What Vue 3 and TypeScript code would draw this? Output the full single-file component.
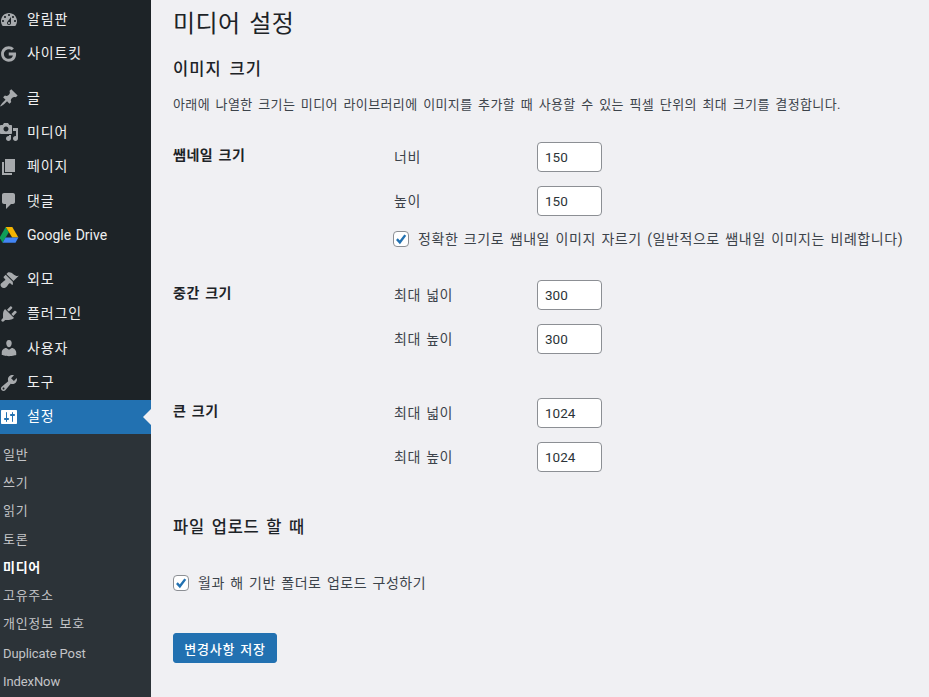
<script setup lang="ts">
interface MenuItem { label: string; d?: string; kind?: string; gap?: boolean; active?: boolean }
const menu: MenuItem[] = [
  { label: '알림판', d: 'M3.76 16h12.48c1.1-1.37 1.76-3.11 1.76-5 0-4.42-3.58-8-8-8s-8 3.58-8 8c0 1.89.66 3.63 1.76 5zM10 4c.55 0 1 .45 1 1s-.45 1-1 1-1-.45-1-1 .45-1 1-1zM6 6c.55 0 1 .45 1 1s-.45 1-1 1-1-.45-1-1 .45-1 1-1zm8 0c.55 0 1 .45 1 1s-.45 1-1 1-1-.45-1-1 .45-1 1-1zm-5.37 5.55L12 7v6c0 1.1-.9 2-2 2s-2-.9-2-2c0-.57.24-1.08.63-1.45zM4 10c.55 0 1 .45 1 1s-.45 1-1 1-1-.45-1-1 .45-1 1-1zm12 0c.55 0 1 .45 1 1s-.45 1-1 1-1-.45-1-1 .45-1 1-1zm-5 3c0-.55-.45-1-1-1s-1 .45-1 1 .45 1 1 1 1-.45 1-1z' },
  { label: '사이트킷', kind: 'g' },
  { label: '글', gap: true, d: 'M10.44 3.02l1.82-1.82 6.36 6.35-1.83 1.82c-1.05-.68-2.48-.57-3.41.36l-.75.75c-.92.93-1.04 2.35-.35 3.41l-1.83 1.82-2.41-2.41-2.8 2.79c-.42.42-3.38 2.71-3.8 2.29s1.86-3.39 2.28-3.81l2.79-2.79L4.1 9.36l1.83-1.82c1.05.69 2.48.57 3.4-.36l.75-.75c.93-.92 1.05-2.35.36-3.41z' },
  { label: '미디어', d: 'M13 11V4c0-.55-.45-1-1-1h-1.67L9 1H5L3.67 3H2c-.55 0-1 .45-1 1v7c0 .55.45 1 1 1h10c.55 0 1-.45 1-1zM7 4.5c1.38 0 2.5 1.12 2.5 2.5S8.38 9.5 7 9.5 4.5 8.38 4.5 7 5.62 4.5 7 4.5zM14 6h5v10.5c0 1.38-1.12 2.5-2.5 2.5S14 17.88 14 16.5s1.12-2.5 2.5-2.5c.17 0 .34.02.5.05V9h-3V6zm-4 8.05V13h2v3.5c0 1.38-1.12 2.5-2.5 2.5S7 17.88 7 16.5 8.12 14 9.5 14c.17 0 .34.02.5.05z' },
  { label: '페이지', d: 'M6 15V2h10v13H6zm-1 1h8v2H3V5h2v11z' },
  { label: '댓글', d: 'M5 2h9c1.1 0 2 .9 2 2v7c0 1.1-.9 2-2 2h-2l-5 5v-5H5c-1.1 0-2-.9-2-2V4c0-1.1.9-2 2-2z' },
  { label: 'Google Drive', kind: 'drive' },
  { label: '외모', gap: true, d: 'M14.48 11.06L7.41 3.99l1.5-1.5c.5-.56 2.3-.47 3.51.32 1.21.8 1.43 1.28 2.91 2.1 1.18.64 2.45 1.26 4.45.85zm-.71.71L6.7 4.7 4.93 6.47c-.39.39-.39 1.02 0 1.41l1.06 1.06c.39.39.39 1.03 0 1.42-.6.6-1.43 1.11-2.21 1.69-.35.26-.7.53-1.01.84C1.43 13.23.99 15.6 2.43 17c1.43 1.43 3.79 1 5.15-.35.31-.31.58-.66.84-1.01.58-.78 1.09-1.61 1.69-2.21.39-.39 1.02-.39 1.41 0l1.06 1.06c.39.39 1.02.39 1.41 0z' },
  { label: '플러그인', d: 'M13.11 4.36L9.87 7.6 8 5.73l3.24-3.24c.35-.34 1.05-.2 1.56.32.52.51.66 1.21.31 1.55zm-8 1.77l.91-1.12 9.01 9.01-1.19.84c-.71.71-2.63 1.16-3.82 1.16H6.14L4.9 17.26c-.59.59-1.54.59-2.12 0-.59-.58-.59-1.53 0-2.12l1.24-1.24v-3.88c0-1.13.4-3.19 1.09-3.89zm7.26 3.97l3.24-3.24c.34-.35 1.04-.21 1.55.31.52.51.66 1.21.31 1.55l-3.24 3.25z' },
  { label: '사용자', d: 'M10 9.25c-2.27 0-2.73-3.44-2.73-3.44C7 4.02 7.82 2 9.97 2c2.16 0 2.98 2.02 2.71 3.81 0 0-.41 3.44-2.68 3.44zm0 2.57L12.72 10c2.39 0 4.52 2.33 4.52 4.53v2.49s-3.65 1.13-7.24 1.13c-3.65 0-7.24-1.13-7.24-1.13v-2.49c0-2.25 1.94-4.48 4.47-4.48z' },
  { label: '도구', d: 'M16.68 9.77c-1.34 1.34-3.3 1.67-4.95.99l-5.41 6.52c-.99.99-2.59.99-3.58 0s-.99-2.59 0-3.57l6.52-5.42c-.68-1.65-.35-3.61.99-4.95 1.28-1.28 3.12-1.62 4.72-1.06l-2.89 2.89 2.82 2.82 2.86-2.87c.53 1.58.18 3.39-1.08 4.65zM3.81 16.21c.4.39 1.04.39 1.43 0 .4-.4.4-1.04 0-1.43-.39-.4-1.03-.4-1.43 0-.39.39-.39 1.03 0 1.43z' },
  { label: '설정', active: true, d: 'M18 16V4c0-.55-.45-1-1-1H3c-.55 0-1 .45-1 1v12c0 .55.45 1 1 1h14c.55 0 1-.45 1-1zM8 11h1c.55 0 1 .45 1 1s-.45 1-1 1H8v1.5c0 .28-.22.5-.5.5s-.5-.22-.5-.5V13H6c-.55 0-1-.45-1-1s.45-1 1-1h1V5.5c0-.28.22-.5.5-.5s.5.22.5.5V11zm5-2h-1c-.55 0-1-.45-1-1s.45-1 1-1h1V5.5c0-.28.22-.5.5-.5s.5.22.5.5V7h1c.55 0 1 .45 1 1s-.45 1-1 1h-1v5.5c0 .28-.22.5-.5.5s-.5-.22-.5-.5V9z' }
]
const sub: { label: string; current?: boolean; latin?: boolean }[] = [
  { label: '일반' }, { label: '쓰기' }, { label: '읽기' }, { label: '토론' },
  { label: '미디어', current: true }, { label: '고유주소' }, { label: '개인정보 보호' },
  { label: 'Duplicate Post', latin: true }, { label: 'IndexNow', latin: true }
]
const sizes = [
  { title: '쌤네일 크기', w: '너비', h: '높이', wv: '150', hv: '150', crop: true },
  { title: '중간 크기', w: '최대 넓이', h: '최대 높이', wv: '300', hv: '300', crop: false },
  { title: '큰 크기', w: '최대 넓이', h: '최대 높이', wv: '1024', hv: '1024', crop: false }
]
</script>

<template>
  <div class="page">
    <aside class="side">
      <ul class="menu">
        <li v-for="m in menu" :key="m.label" class="item" :class="{ gap: m.gap, active: m.active, latin: m.kind === 'drive' }">
          <svg v-if="m.d" class="ico" viewBox="0 0 20 20"><path :d="m.d" fill-rule="evenodd" fill="currentColor" /></svg>
          <svg v-else-if="m.kind === 'g'" class="ico" viewBox="-1.500 -2 24 24"><path fill="currentColor" d="M10.2 8.3v3.5h5c-.3 1.6-1.9 4-5 4-3.2 0-5.8-2.600-5.800-5.800s2.600-5.800 5.800-5.800c1.700 0 2.900.7 3.700 1.400l2.500-2.500C14.600 1.700 12.600.8 10.200.8 5.100.8 1 4.900 1 10s4.100 9.200 9.200 9.200c5.300 0 8.800-3.700 8.800-9 0-.7-.1-1.300-.2-1.900z" /></svg>
          <svg v-else class="ico" viewBox="0 0 20 20">
            <path fill="#0f9d58" d="M6.700 2 .6 12.600l3 5.200L9.800 7.200z" />
            <path fill="#f4b400" d="M6.700 2h6.600l6.100 10.600h-6.200z" />
            <path fill="#4285f4" d="M3.600 17.800h12.900l2.900-5.200H6.600z" />
          </svg>
          <span class="lbl">{{ m.label }}</span>
        </li>
      </ul>
      <ul class="sub">
        <li v-for="s in sub" :key="s.label" :class="{ current: s.current, latin: s.latin }">{{ s.label }}</li>
      </ul>
    </aside>

    <main class="main">
      <h1>미디어 설정</h1>
      <h2 class="h-img">이미지 크기</h2>
      <p class="desc">아래에 나열한 크기는 미디어 라이브러리에 이미지를 추가할 때 사용할 수 있는 픽셀 단위의 최대 크기를 결정합니다.</p>

      <section v-for="s in sizes" :key="s.title" class="size" :class="{ crop: s.crop }">
        <div class="th">{{ s.title }}</div>
        <div class="fields">
          <label class="field"><span>{{ s.w }}</span><input class="num" type="text" :value="s.wv" /></label>
          <label class="field"><span>{{ s.h }}</span><input class="num" type="text" :value="s.hv" /></label>
          <div v-if="s.crop" class="check crop-check">
            <span class="box"><svg viewBox="0 0 16 16"><path d="M3.300 8.100 6.700 11.800 12.900 3.600" fill="none" stroke="#2271b1" stroke-width="2.700" /></svg></span>
            <span>정확한 크기로 쌤내일 이미지 자르기 (일반적으로 쌤내일 이미지는 비례합니다)</span>
          </div>
        </div>
      </section>

      <h2 class="h-upload">파일 업로드 할 때</h2>
      <div class="check upload-check">
        <span class="box"><svg viewBox="0 0 16 16"><path d="M3.300 8.100 6.700 11.800 12.900 3.600" fill="none" stroke="#2271b1" stroke-width="2.700" /></svg></span>
        <span>월과 해 기반 폴더로 업로드 구성하기</span>
      </div>
      <button class="save" type="button">변경사항 저장</button>
    </main>
  </div>
</template>

<style>
html, body { margin: 0; height: 100%; overflow: hidden; background: #f0f0f3; }
</style>

<style scoped>
.page {
  display: flex;
  width: 929px;
  height: 697px;
  overflow: hidden;
  background: #f0f0f3;
  color: #3c434a;
  font-family: Roboto, "Noto Sans CJK KR", sans-serif;
  font-size: 13px;
}
.side { width: 151px; flex: none; background: #1d2327; }
.menu, .sub { list-style: none; margin: 0; padding: 0; }
.menu { padding-top: 2.400px; }
.item {
  position: relative;
  display: flex;
  align-items: center;
  gap: 8px;
  height: 34.300px;
  margin-left: -1px;
  color: #f0f0f1;
  font-size: 14px;
  letter-spacing: .9px;
  word-spacing: 1px;
}
.item.latin { letter-spacing: 0; }
.lbl { padding-bottom: 3px; }
.item.latin .lbl { padding-bottom: 0; }
.item.gap { margin-top: 10px; }
.ico { width: 20px; height: 20px; flex: none; color: #a7aaad; }
.item.active { height: 34px; background: #2271b1; color: #fff; }
.item.active .ico { color: #fff; }
.item.active::after {
  content: "";
  position: absolute;
  right: 0;
  top: 9px;
  border: 8px solid transparent;
  border-right-color: #f0f0f3;
}
.sub {
  background: #2c3338;
  padding-top: 7px;
  height: 263px;
}
.sub li {
  height: 28.300px;
  line-height: 28.300px;
  padding-left: 3px;
  color: #c3c4c7;
  font-size: 13px;
  letter-spacing: .7px;
  word-spacing: 2px;
}
.sub li.current { color: #fff; font-weight: 700; }
.sub li.latin { position: relative; top: 1px; letter-spacing: -.1px; word-spacing: 0; }

.main {
  flex: 1;
  min-width: 0;
  padding-left: 22px;
  letter-spacing: .5px;
  word-spacing: 1.500px;
}
h1 {
  margin: 0;
  padding-top: 8px;
  font-size: 24px;
  font-weight: 400;
  line-height: 32px;
  color: #1d2327;
  letter-spacing: .4px;
  word-spacing: 2.500px;
}
h2 {
  margin: 0;
  font-size: 16.500px;
  font-weight: 500;
  line-height: 24px;
  color: #1d2327;
  letter-spacing: 1.100px;
  word-spacing: 2.500px;
}
.h-img { margin-top: 18px; }
.desc { margin: 13px 0 0; line-height: 20px; font-size: 13px; letter-spacing: .38px; word-spacing: 2px; }
.size { display: flex; }
.size.crop { margin-top: 27px; }
.size + .size { margin-top: 26px; }
.size + .size + .size { margin-top: 44px; }
.th {
  width: 221px;
  flex: none;
  padding-top: 3px;
  font-size: 14px;
  font-weight: 700;
  line-height: 20px;
  color: #1d2327;
}
.fields { display: flex; flex-direction: column; gap: 14px; }
.field { display: flex; align-items: center; height: 30px; font-size: 14px; }
.field span { width: 143px; flex: none; padding-bottom: 2px; }
.num {
  box-sizing: border-box;
  width: 65px;
  height: 30px;
  padding: 0 7px;
  border: 1px solid #8c8f94;
  border-radius: 4px;
  background: #fff;
  color: #2c3338;
  font: inherit;
  font-size: 13.500px;
  letter-spacing: 0;
  outline: none;
}
.check { display: flex; align-items: center; gap: 9px; font-size: 14px; line-height: 20px; white-space: nowrap; }
.crop-check { margin-top: -1px; margin-bottom: 5px; margin-left: -1px; letter-spacing: .56px; }
.box {
  box-sizing: border-box;
  width: 16px;
  height: 16px;
  flex: none;
  border: 1px solid #8c8f94;
  border-radius: 4px;
  background: #fff;
  display: flex;
}
.box svg { width: 14px; height: 14px; }
.h-upload { margin-top: 44px; word-spacing: 1.800px; letter-spacing: .8px; }
.upload-check { margin-top: 33px; }
.save {
  display: block;
  box-sizing: border-box;
  width: 104px;
  height: 30px;
  margin-top: 40px;
  padding: 0;
  border: 1px solid #2271b1;
  border-radius: 3px;
  background: #2271b1;
  color: #fff;
  font: inherit;
  font-size: 13px;
  font-weight: 500;
  letter-spacing: .8px;
  word-spacing: 1px;
}
</style>
